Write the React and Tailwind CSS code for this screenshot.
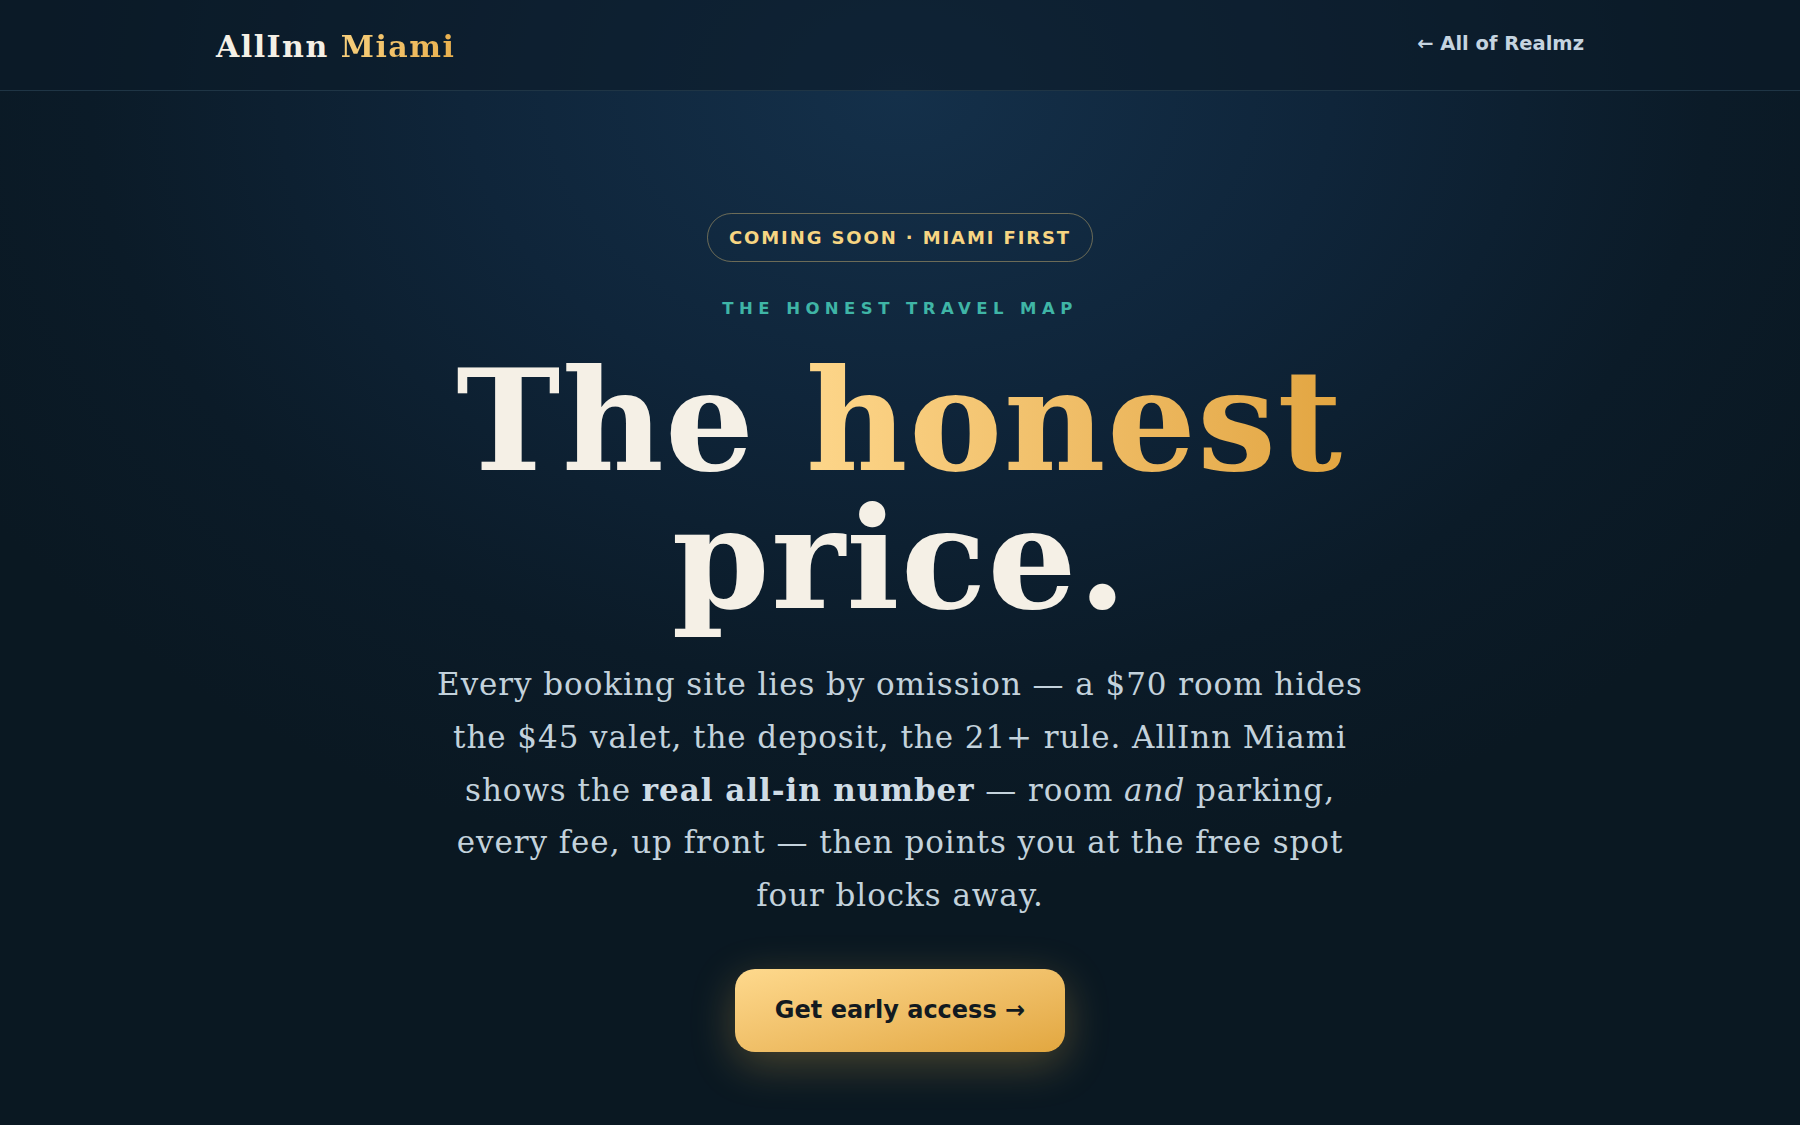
const serif = { fontFamily: '"DejaVu Serif", "Liberation Serif", serif' };
const sans = { fontFamily: '"DejaVu Sans", "Liberation Sans", sans-serif' };

function Header() {
  return (
    <header className="border-b border-[#1f3545] bg-[#0b1b28]/60">
      <div className="mx-auto flex h-[90px] max-w-[1368px] items-center justify-between">
        <a href="#" className="mt-[3px] text-[30px] font-bold tracking-[0.05em] text-[#f5f0e6]" style={serif}>
          AllInn{' '}
          <span className="bg-linear-to-r from-[#f7cf7c] to-[#e9b04e] bg-clip-text text-transparent">Miami</span>
        </a>
        <a href="#" className="mb-[3px] text-[19.5px] font-bold text-[#c5d4e0]" style={sans}>
          ← All of Realmz
        </a>
      </div>
    </header>
  );
}

function Hero() {
  return (
    <section className="flex flex-col items-center px-6 pt-[122px] pb-20 text-center">
      <span
        className="rounded-full border border-[#f5d07a]/40 px-[21px] py-[11px] text-[18px] leading-[25px] font-bold tracking-[0.105em] text-[#f7d582]"
        style={sans}
      >
        COMING SOON · MIAMI FIRST
      </span>

      <p className="mt-9 text-[16.5px] leading-[22px] font-bold tracking-[0.33em] text-[#3fb5a6]" style={sans}>
        THE HONEST TRAVEL MAP
      </p>

      <h1 className="mt-8 text-[140px] leading-[138px] font-bold tracking-[0.01em] text-[#f5f0e6]" style={serif}>
        The{' '}
        <span className="bg-linear-to-r from-[#fdd68a] to-[#e2a540] bg-clip-text text-transparent">honest</span>
        <br />
        price.
      </h1>

      <p
        className="mt-[30px] max-w-[950px] text-[31px] leading-[52.8px] tracking-[0.03em] text-[#c3d2dc]"
        style={serif}
      >
        Every booking site lies by omission — a $70 room hides the $45 valet, the deposit, the 21+ rule. AllInn
        Miami shows the <strong className="font-bold text-[#cfdce5]">real all-in number</strong> — room{' '}
        <em>and</em> parking, every fee, up front — then points you at the free spot four blocks away.
      </p>

      <a
        href="#"
        className="mt-[47px] rounded-[20px] bg-linear-to-br from-[#fed98d] to-[#e2a73f] px-10 py-[22px] text-[24px] leading-[39px] font-bold text-[#121a20] shadow-[0_12px_44px_rgba(240,185,80,0.28)]"
        style={sans}
      >
        Get early access →
      </a>
    </section>
  );
}

export default function App() {
  return (
    <div className="min-h-screen bg-[#0a1823] bg-[radial-gradient(ellipse_60%_70%_at_50%_8%,#14304a_0%,#0f253a_40%,#0b1b28_75%,#0a1822_100%)]">
      <Header />
      <Hero />
    </div>
  );
}
